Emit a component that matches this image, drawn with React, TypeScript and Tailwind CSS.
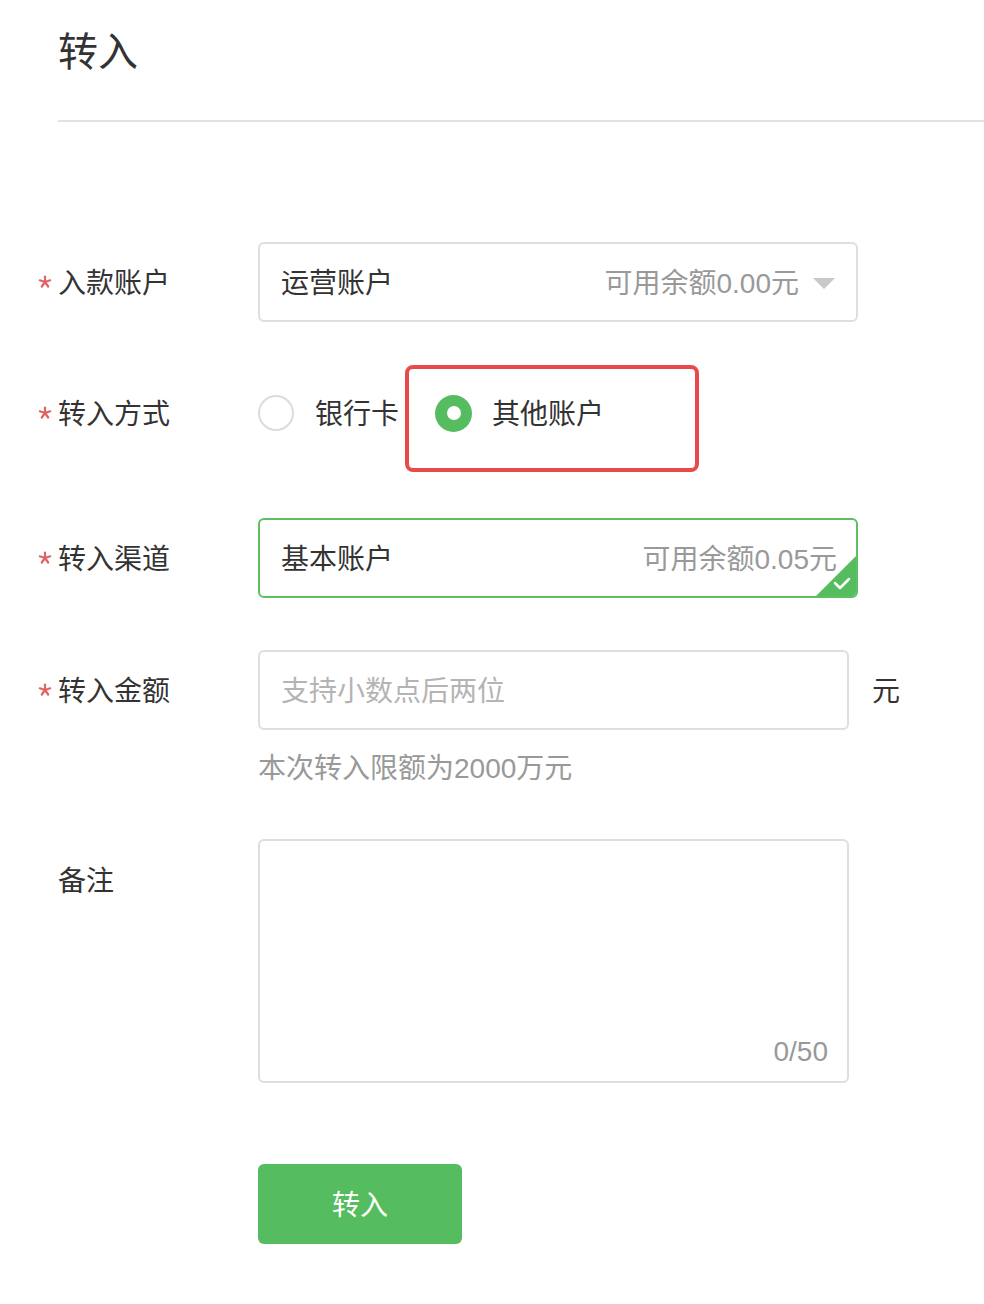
import React from "react";

function Star() {
  return (
    <svg width="14" height="14" viewBox="0 0 14 14" className="absolute left-[-20px] top-1/2 -translate-y-1/2">
      <g stroke="#e06262" strokeWidth="2.2" strokeLinecap="round">
        <line x1="7" y1="1.5" x2="7" y2="7" />
        <line x1="7" y1="7" x2="1.8" y2="5.3" />
        <line x1="7" y1="7" x2="12.2" y2="5.3" />
        <line x1="7" y1="7" x2="3.8" y2="11.5" />
        <line x1="7" y1="7" x2="10.2" y2="11.5" />
      </g>
    </svg>
  );
}

function Req({ children }: { children: React.ReactNode }) {
  return (
    <div className="relative w-[200px] shrink-0 pt-[3px] text-[28px] leading-[80px] text-[#333]">
      <Star />
      {children}
    </div>
  );
}

export default function App() {
  return (
    <div className="min-h-[1304px] w-[984px] bg-white font-['Liberation_Sans','Noto_Sans_CJK_SC',sans-serif] text-[#333]">
      <div className="pl-[58px] pt-[29px]">
        <h1 className="text-[40px] leading-[46px] text-[#333]">转入</h1>
      </div>
      <div className="ml-[58px] mt-[45px] h-[2px] bg-[#e2e2e2]" />

      <div className="pl-[58px] pt-[120px]">
        {/* Row 1 */}
        <div className="flex h-[80px] items-center">
          <Req>入款账户</Req>
          <div className="flex h-[80px] w-[600px] items-center justify-between rounded-[6px] border-2 border-[#dedede] pl-[21px] pr-[21px] pt-[3px]">
            <span className="text-[28px] text-[#333]">运营账户</span>
            <span className="flex items-center">
              <span className="text-[28px] text-[#999]">可用余额0.00元</span>
              <svg width="22" height="11" viewBox="0 0 22 11" className="ml-[14px]">
                <polygon points="0,0 22,0 11,11" fill="#c8c8c8" />
              </svg>
            </span>
          </div>
        </div>

        {/* Row 2 */}
        <div className="mt-[51px] flex h-[80px] items-center">
          <Req>转入方式</Req>
          <div className="flex h-full items-center">
            <span className="h-[36px] w-[36px] rounded-full border-2 border-[#dcdcdc]" />
            <span className="ml-[21px] pt-[3px] text-[28px] text-[#333]">银行卡</span>
            <div className="relative ml-[36px] flex h-full items-center">
              <div className="absolute left-[-30px] top-[-8px] h-[107px] w-[294px] rounded-[8px] border-4 border-[#e84a4a]" />
              <span className="flex h-[37px] w-[37px] items-center justify-center rounded-full bg-[#55bd5f]">
                <span className="h-[14px] w-[14px] rounded-full bg-white" />
              </span>
              <span className="ml-[20px] pt-[3px] text-[28px] text-[#333]">其他账户</span>
            </div>
          </div>
        </div>

        {/* Row 3 */}
        <div className="mt-[65px] flex h-[80px] items-center">
          <Req>转入渠道</Req>
          <div className="relative flex h-[80px] w-[600px] items-center justify-between overflow-hidden rounded-[6px] border-2 border-[#5cbf62] pl-[21px] pr-[19px] pt-[3px]">
            <span className="text-[28px] text-[#333]">基本账户</span>
            <span className="text-[28px] text-[#999]">可用余额0.05元</span>
            <svg width="40" height="40" viewBox="0 0 40 40" className="absolute bottom-0 right-0">
              <polygon points="40,0 40,40 0,40" fill="#55bd5f" />
              <path d="M19 27 L24 32 L33 23" stroke="#fff" strokeWidth="2.5" fill="none" strokeLinecap="round" strokeLinejoin="round" />
            </svg>
          </div>
        </div>

        {/* Row 4 */}
        <div className="mt-[52px] flex h-[80px] items-center">
          <Req>转入金额</Req>
          <div className="flex h-[80px] w-[591px] items-center rounded-[6px] border-2 border-[#dedede] pl-[21px] pt-[3px]">
            <span className="text-[28px] text-[#b4b4b4]">支持小数点后两位</span>
          </div>
          <span className="ml-[23px] pt-[3px] text-[28px] text-[#333]">元</span>
        </div>
        <div className="ml-[200px] mt-[19px] text-[28px] leading-[40px] text-[#999]">本次转入限额为2000万元</div>

        {/* Row 5 */}
        <div className="mt-[50px] flex items-start">
          <div className="w-[200px] shrink-0 pt-[3px] text-[28px] leading-[80px] text-[#333]">备注</div>
          <div className="flex h-[244px] w-[591px] flex-col items-end justify-end rounded-[6px] border-2 border-[#dedede] pb-[11px] pr-[19px]">
            <span className="text-[28px] leading-[36px] text-[#999]">0/50</span>
          </div>
        </div>

        {/* Button */}
        <div className="ml-[200px] mt-[81px] flex h-[80px] w-[204px] items-center justify-center rounded-[6px] bg-[#55bd5f] pt-[3px] text-[28px] text-white">
          转入
        </div>
      </div>
    </div>
  );
}
